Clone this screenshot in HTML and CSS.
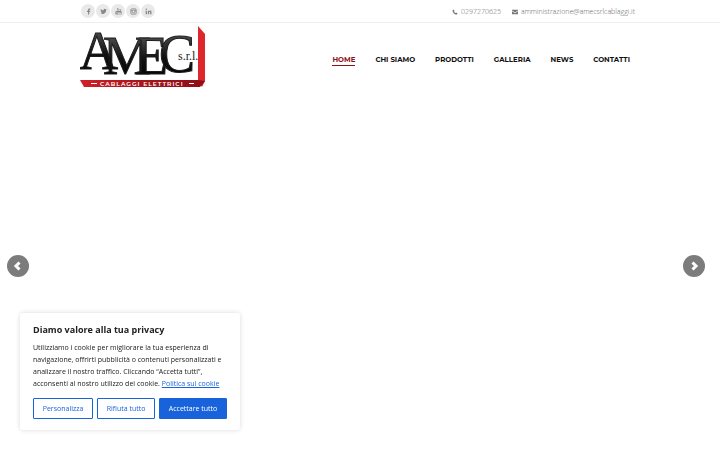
FILE: index.html
```html
<!DOCTYPE html>
<html lang="it">

<head>
    <meta charset="UTF-8">
    <meta name="viewport" content="width=device-width, initial-scale=1.0">
    <title>AMEC s.r.l. - Cablaggi elettrici</title>
    <link rel="stylesheet" href="styles.css">
</head>

<body>
    <div class="topbar">
        <div class="container topbar-inner">
            <div class="social">
                <a href="#" aria-label="Facebook"><svg viewBox="0 0 16 16"><path d="M9.5 15V9h2l.4-2.6H9.5V5c0-.8.3-1.200 1.200-1.200H12V1.300C11.600 1.200 11 1.100 10.200 1.100 8.200 1.100 6.900 2.300 6.900 4.500v1.900H4.600V9h2.300v6z"/></svg></a>
                <a href="#" aria-label="Twitter"><svg viewBox="0 0 16 16"><path d="M15.500 3.500c-.6.3-1.100.4-1.700.5.6-.4 1.100-1 1.300-1.700-.6.4-1.200.6-1.900.7A3 3 0 0 0 8 5.700C5.500 5.600 3.300 4.400 1.800 2.500c-.8 1.400-.4 3.100.9 4-.5 0-.9-.1-1.300-.4 0 1.500 1 2.700 2.400 3-.4.100-.9.100-1.300 0 .4 1.200 1.500 2.100 2.800 2.100A6 6 0 0 1 .8 12.500 8.600 8.600 0 0 0 14 4.900c.6-.4 1.100-.9 1.500-1.400z"/></svg></a>
                <a href="#" aria-label="YouTube"><svg viewBox="0 0 16 16"><path d="M4 0l1.400 3.500V6h1.200V3.500L8 0H6.800L6 2.200 5.200 0zM8 2h1.500v4H8zM11 2h1v3h1V2h1v4h-3z"/><path fill-rule="evenodd" d="M3 7h10q2 0 2 2v4q0 2-2 2H3q-2 0-2-2V9q0-2 2-2zm0 2v1h1v4h1v-4h1V9zm4 1v4h2v-4zm3-1v5h3v-4h-2V9z"/></svg></a>
                <a href="#" aria-label="Instagram"><svg class="outline" viewBox="0 0 16 16"><rect x="2" y="2" width="12" height="12" rx="2"/><circle cx="8" cy="8" r="3"/><path d="M11 4h1M2 6h3M11 6h3"/></svg></a>
                <a href="#" aria-label="LinkedIn"><svg viewBox="0 0 16 16"><circle cx="3" cy="3" r="1.700"/><path d="M1.500 6h3v8h-3zM6.500 6h2.800v1.200c1.300-2.200 5.500-1.800 5.500 2V14h-3V9.800c0-2-2.300-1.900-2.300 0V14h-3z"/></svg></a>
            </div>
            <div class="contacts">
                <a href="tel:0297270625"><svg viewBox="0 0 16 16"><path d="M4 1L1.500 3C1 9 7 15 13 14.500l2-2.500-4-3-2 1.700C7.500 10 6 8.500 5.300 7L7 5z"/></svg>0297270625</a>
                <a href="mailto:amministrazione@amecsrlcablaggi.it"><svg viewBox="0 0 16 16"><path d="M0 2h16v2L8 9 0 4zM0 6l8 5 8-5v8H0z"/></svg>amministrazione@amecsrlcablaggi.it</a>
            </div>
        </div>
    </div>

    <header class="container header">
        <a class="logo" href="#" aria-label="AMEC s.r.l.">
            <svg viewBox="0 0 126 62">
                <defs>
                    <linearGradient id="steel" x1="0" y1="0" x2="0" y2="1">
                        <stop offset="0.200" stop-color="#484848"/>
                        <stop offset="0.550" stop-color="#111"/>
                        <stop offset="1" stop-color="#000"/>
                    </linearGradient>
                    <linearGradient id="red" x1="0" y1="0" x2="1" y2="0">
                        <stop offset="0" stop-color="#d12028"/>
                        <stop offset="0.500" stop-color="#a5161d"/>
                        <stop offset="1" stop-color="#8c1016"/>
                    </linearGradient>
                </defs>
                <path fill="#e0262d" d="M118 5V0l7 8v47l-3 6-4-6z"/>
                <path fill="url(#red)" d="M0 54h118l7 1-5 6H4z"/>
                <g class="logo-name" fill="url(#steel)">
                    <text x="-1" y="43">A</text>
                    <text x="23" y="48">M</text>
                    <text x="55" y="48">E</text>
                    <text x="79" y="46">C</text>
                </g>
                <text class="logo-type" x="98" y="34">s.r.l.</text>
                <path stroke="#fff" d="M11 57.500h6M109 57.500h5"/>
                <text class="logo-claim" x="20" y="60">CABLAGGI ELETTRICI</text>
            </svg>
        </a>
        <nav class="menu">
            <a class="active" href="#">HOME</a>
            <a href="#">CHI SIAMO</a>
            <a href="#">PRODOTTI</a>
            <a href="#">GALLERIA</a>
            <a href="#">NEWS</a>
            <a href="#">CONTATTI</a>
        </nav>
    </header>

    <main class="slider">
        <button class="arrow" type="button" aria-label="Precedente"><svg viewBox="0 0 10 10"><path d="M6.500 1.500L3 5l3.500 3.500"/></svg></button>
        <button class="arrow" type="button" aria-label="Successiva"><svg viewBox="0 0 10 10"><path d="M3.500 1.500L7 5 3.500 8.500"/></svg></button>
    </main>

    <section class="cookie">
        <h2>Diamo valore alla tua privacy</h2>
        <p>Utilizziamo i cookie per migliorare la tua esperienza di navigazione, offrirti pubblicità o contenuti personalizzati e analizzare il nostro traffico. Cliccando “Accetta tutti”, acconsenti al nostro utilizzo dei cookie. <a href="#">Politica sui cookie</a></p>
        <div class="cookie-buttons">
            <button type="button">Personalizza</button>
            <button type="button">Rifiuta tutto</button>
            <button class="accept" type="button">Accettare tutto</button>
        </div>
    </section>
</body>

</html>
```
FILE: styles.css
```css
* {
    box-sizing: border-box;
}

body {
    font-family: "Open Sans", sans-serif;
    background-color: #fff;
    color: #212121;
    margin: 0;
    min-height: 100vh;
    display: flex;
    flex-direction: column;
}

a {
    text-decoration: none;
}

.container {
    width: 100%;
    padding: 0 80px;
}

.topbar {
    border-bottom: 1px solid #eee;
}

.topbar-inner {
    display: flex;
    justify-content: space-between;
    align-items: center;
    height: 22px;
}

.social {
    display: flex;
    gap: 1px;
    padding-left: 1px;
}

.social a {
    display: flex;
    align-items: center;
    justify-content: center;
    width: 14px;
    height: 14px;
    border-radius: 50%;
    background-color: #e9e9e9;
}

.social svg {
    width: 7px;
    height: 7px;
    fill: #888;
}

.social .outline {
    fill: none;
    stroke: #888;
    stroke-width: 2;
}

.contacts {
    display: flex;
    gap: 11px;
    padding: 1px 5px 0 0;
}

.contacts a {
    display: flex;
    align-items: center;
    gap: 3px;
    font-size: 7px;
    font-weight: 300;
    color: #666;
}

.contacts svg {
    width: 6px;
    height: 6px;
    fill: #777;
}

.header {
    display: flex;
    justify-content: space-between;
    align-items: center;
    height: 68px;
    padding-right: 90px;
}

.logo svg {
    display: block;
    width: 126px;
    height: 62px;
}

.logo-name {
    font-family: "Liberation Serif", serif;
    font-size: 54px;
    stroke: #1c1c1c;
    stroke-width: 1px;
}

.logo-type {
    font-family: "Liberation Serif", serif;
    font-size: 12px;
    fill: #222;
}

.logo-claim {
    font-family: Montserrat, Inter, sans-serif;
    font-size: 6px;
    font-weight: 600;
    letter-spacing: 1px;
    fill: #fff;
}

.menu {
    display: flex;
    gap: 20px;
    padding-top: 6px;
}

.menu a {
    font-family: Montserrat, Inter, sans-serif;
    font-size: 7px;
    font-weight: 700;
    line-height: 10px;
    color: #111;
    border-bottom: 1px solid transparent;
}

.menu .active {
    color: #8e1118;
    border-color: #8e1118;
}

.slider {
    flex: 1;
    display: flex;
    justify-content: space-between;
    align-items: center;
    padding: 0 15px 9px 7px;
}

.arrow {
    display: flex;
    align-items: center;
    justify-content: center;
    width: 22px;
    height: 22px;
    padding: 0;
    border: none;
    border-radius: 50%;
    background-color: #7c7c7c;
    cursor: pointer;
}

.arrow svg {
    width: 10px;
    height: 10px;
    fill: none;
    stroke: #fff;
    stroke-width: 3;
}

.cookie {
    position: fixed;
    left: 20px;
    bottom: 20px;
    width: 220px;
    padding: 11px 13px;
    background-color: #fff;
    border-radius: 3px;
    box-shadow: 0 0 5px rgba(0, 0, 0, 0.15);
}

.cookie h2 {
    margin: 0 0 6px;
    font-size: 9px;
    line-height: 12px;
}

.cookie p {
    margin: 0 0 8px;
    font-size: 7px;
    line-height: 12px;
}

.cookie p a {
    color: #1863dc;
    text-decoration: underline;
}

.cookie-buttons {
    display: flex;
    gap: 4px;
}

.cookie-buttons button {
    flex: 1 1 auto;
    height: 21px;
    padding: 0 6px;
    border: 1px solid #1863dc;
    border-radius: 1px;
    background-color: #fff;
    color: #1863dc;
    font-family: inherit;
    font-size: 7px;
    white-space: nowrap;
    cursor: pointer;
}

.cookie-buttons .accept {
    background-color: #1863dc;
    color: #fff;
}
```
